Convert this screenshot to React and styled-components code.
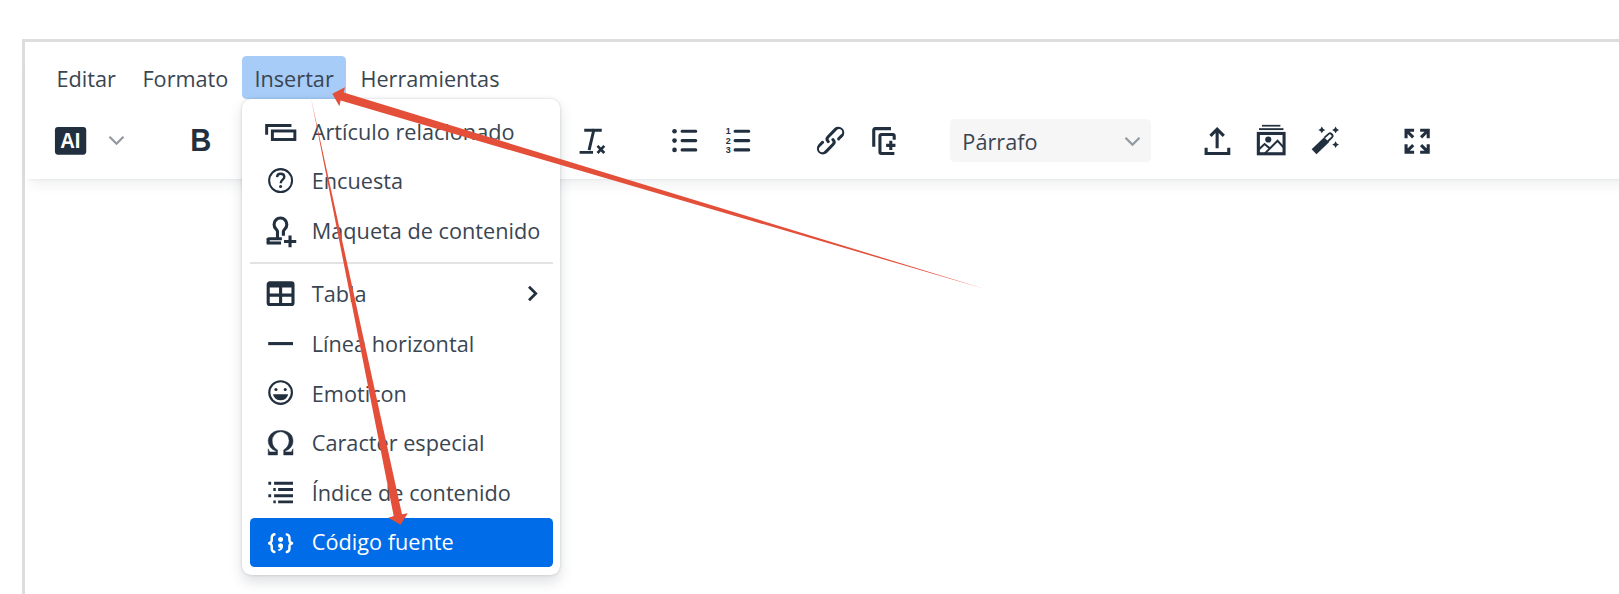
import styled, { createGlobalStyle } from 'styled-components';

const GlobalStyle = createGlobalStyle`
  * { box-sizing: border-box; }
  body {
    margin: 0;
    background: #fff;
    overflow: hidden;
    font-family: 'Open Sans', 'Noto Sans', sans-serif;
    font-size: 21.7px;
    color: #222f3e;
  }
`;

const Page = styled.div`
  width: 100vw;
  height: 594px;
  padding: 39px 0 0 22px;
  overflow: hidden;
  position: relative;
`;

const Editor = styled.div`
  width: 1640px;
  height: 600px;
  border: solid #ddd;
  border-width: 3px 0 0 3px;
`;

const Header = styled.header`
  height: 136.5px;
  padding: 13.7px 0 0 19px;
  background: #fff;
  box-shadow: 0 3px 3px -3px rgba(34, 47, 62, 0.1),
    0 12.4px 12.4px -6.2px rgba(34, 47, 62, 0.07);
`;

const MenuBar = styled.nav`
  display: flex;
  gap: 2px;
`;

const MenuSlot = styled.div`
  position: relative;
`;

const MenuButton = styled.button`
  display: block;
  height: 43.4px;
  width: ${props => props.$width}px;
  padding: 0 0 0 12.4px;
  border: 0;
  border-radius: 4.6px;
  background: ${props => (props.$open ? '#a6ccf7' : 'transparent')};
  color: #3a4552;
  font: inherit;
  line-height: 46px;
  text-align: left;
  white-space: nowrap;
`;

const Menu = styled.div`
  position: absolute;
  z-index: 2;
  top: 43.4px;
  left: 0;
  width: 318.4px;
  padding: 8px 7.8px;
  border-radius: 9.3px;
  background: #fff;
  box-shadow: 0 0 3px 0 rgba(34, 47, 62, 0.2), 0 6.2px 12.4px 0 rgba(34, 47, 62, 0.15);
`;

const MenuItem = styled.div`
  display: flex;
  align-items: center;
  height: 49.6px;
  padding: 0 12px 1.4px 12.4px;
  border-radius: 4.6px;
  background: ${props => (props.$active ? '#006ce7' : 'transparent')};
  color: ${props => (props.$active ? '#fff' : 'inherit')};
`;

const ItemLabel = styled.span`
  flex: 1;
  margin-left: 12.4px;
  color: ${props => (props.$active ? '#fff' : '#3a4552')};
  white-space: nowrap;
`;

const Separator = styled.hr`
  height: 1.5px;
  margin: 6.2px 0;
  border: 0;
  background: #e3e3e3;
`;

const ToolBar = styled.div`
  display: flex;
  align-items: center;
  gap: 39px;
  height: 43.4px;
  margin-top: 20px;
`;

const Group = styled.div`
  display: flex;
  align-items: center;
  justify-content: space-between;
  width: ${props => (props.$width ? `${props.$width}px` : 'auto')};
`;

const ToolButton = styled.button`
  display: flex;
  align-items: center;
  justify-content: center;
  width: ${props => props.$width || 53.6}px;
  height: 43.4px;
  padding: 0;
  border: 0;
  background: transparent;
  color: inherit;
`;

const BlockSelect = styled.div`
  display: flex;
  align-items: center;
  justify-content: space-between;
  width: 201.4px;
  height: 43.4px;
  padding: 1px 10px 0 12.4px;
  border-radius: 4.6px;
  background: #f6f6f6;
  color: #3a4552;
`;

const Svg = styled.svg`
  display: block;
  flex: none;
  width: 37.2px;
  height: 37.2px;
  overflow: visible;
  fill: none;
  stroke: currentColor;
  stroke-width: 2;
`;

const ChevronSvg = styled.svg`
  display: block;
  flex: none;
  width: 17px;
  height: 17px;
  fill: none;
  stroke: ${props => props.$color};
  stroke-width: ${props => props.$weight};
`;

const Arrows = styled.svg`
  position: absolute;
  z-index: 3;
  inset: 0;
  width: 1619px;
  height: 594px;
  fill: #e44f3a;
  pointer-events: none;
`;

const Solid = props => <g fill="currentColor" stroke="none" {...props} />;

const icons = {
  ai: (
    <>
      <rect x="1.9" y="3.3" width="20.2" height="17.8" rx="2" fill="#222f3e" stroke="none" />
      <text x="11.8" y="17" textAnchor="middle" fill="#fff" stroke="none"
        fontFamily="Liberation Sans" fontWeight="700" fontSize="13.8" textLength="13" lengthAdjust="spacingAndGlyphs">AI</text>
    </>
  ),
  bold: (
    <Solid>
      <text x="4.7" y="19" fontFamily="Liberation Sans" fontWeight="700" fontSize="20" textLength="13.6" lengthAdjust="spacingAndGlyphs">B</text>
    </Solid>
  ),
  clear: (
    <>
      <path d="M8.2 5.3h9.4M13.4 5.3 10.6 17.2M5.2 19.6h6.8" strokeLinecap="square" strokeWidth="1.9" />
      <path d="m15.8 15.4 4.4 4.6M20.2 15.4l-4.4 4.6" strokeWidth="1.7" />
    </>
  ),
  bullets: (
    <>
      <path d="M10.4 6h8.8M10.4 12h8.8M10.4 18h8.8" strokeLinecap="round" />
      <Solid>
        <circle cx="5.5" cy="6" r="1.5" />
        <circle cx="5.5" cy="12" r="1.5" />
        <circle cx="5.5" cy="18" r="1.5" />
      </Solid>
    </>
  ),
  numbers: (
    <>
      <path d="M10.4 6h8.8M10.4 12h8.8M10.4 18h8.8" strokeLinecap="round" />
      <Solid fontFamily="Liberation Sans" fontWeight="700" fontSize="5.8">
        <text x="4.4" y="8">1</text>
        <text x="4.4" y="14">2</text>
        <text x="4.4" y="20">3</text>
      </Solid>
    </>
  ),
  link: (
    <Solid>
      <path d="M6.2 12.3a1 1 0 0 1 1.4 1.4l-2 2a2 2 0 1 0 2.6 2.8l4.8-4.8a1 1 0 0 0 0-1.4 1 1 0 1 1 1.4-1.3 2.9 2.9 0 0 1 0 4L9.6 20a3.9 3.9 0 0 1-5.5-5.5l2-2Zm11.6-.6a1 1 0 0 1-1.4-1.4l2-2a2 2 0 1 0-2.6-2.8L11 10.3a1 1 0 0 0 0 1.4A1 1 0 1 1 9.6 13a2.9 2.9 0 0 1 0-4L14.4 4a3.9 3.9 0 0 1 5.5 5.5l-2 2Z" />
    </Solid>
  ),
  copyPlus: (
    <>
      <path d="M16.1 4.3H5.8a.8.8 0 0 0-.8.8V16" />
      <path d="M18.2 11.5V9a.9.9 0 0 0-.9-.9H9.9a.9.9 0 0 0-.9.9v10.4c0 .5.4.9.9.9h8.4" />
      <path d="M13 15.1h6M16 12.1v6" />
    </>
  ),
  upload: (
    <>
      <path d="M11.7 17V5M7.4 9 11.7 4.6 16 9" />
      <path d="M4.6 16.6v3.7h14.6v-3.7" />
    </>
  ),
  gallery: (
    <>
      <path d="M6.4 2.4h11.9" strokeWidth="1.1" />
      <path d="M4.5 4.6h15.8" strokeWidth="1.2" />
      <rect x="4.1" y="7.4" width="16.6" height="13.1" />
      <path d="m4.7 17.4 3.4-3.2 3 2.5M8.2 20.4l8.3-8.3 4 4.4" strokeWidth="1.3" />
      <circle cx="10.5" cy="11.3" r="2" fill="currentColor" stroke="none" />
    </>
  ),
  wand: (
    <>
      <path d="M5.2 19.2 13.3 11.4" strokeWidth="4.5" />
      <path d="m11.9 10.1 2.9-2.6c1-.8 3.1 1.1 2.1 2.3l-2.9 2.8" strokeWidth="1.2" />
      <Solid>
        <path d="m10.2 2.9.8 1.4 1.4.8-1.4.8-.8 1.4-.8-1.4-1.4-.8 1.4-.8zM19.1 2.9l.8 1.4 1.4.8-1.4.8-.8 1.4-.8-1.4-1.4-.8 1.4-.8zM19.1 12.4l.8 1.4 1.4.8-1.4.8-.8 1.4-.8-1.4-1.4-.8 1.4-.8z" />
      </Solid>
    </>
  ),
  fullscreen: (
    <path d="M5.2 10.5V5.3h5.2M5.4 5.5l4.4 4.4M14.3 5.3h5.2v5.2M19.3 5.5l-4.4 4.4M5.2 14.3v5.2h5.2M5.4 19.3l4.4-4.4M14.3 19.5h5.2v-5.2M19.3 19.3l-4.4-4.4" />
  ),
  related: (
    <>
      <path d="M19 8.1H3V14" strokeWidth="1.9" />
      <rect x="6.7" y="11.6" width="14.5" height="5.5" strokeWidth="1.9" />
    </>
  ),
  help: (
    <>
      <circle cx="12" cy="12" r="7.4" strokeWidth="1.3" />
      <path d="M9.7 9.8c.1-1.5 1.1-2.2 2.3-2.2 1.4 0 2.4.8 2.4 2.1 0 1.7-2.3 1.8-2.3 4" strokeWidth="1.5" />
      <circle cx="12" cy="15.8" r="1" fill="currentColor" stroke="none" />
    </>
  ),
  stamp: (
    <>
      <path d="M10 16.6V12.6c0-.7-.5-1-1-1.7A4.1 4.1 0 1 1 14.8 10.9c-.5.7-1 1-1 1.7V15.4M3.9 18.3c0-.7.3-1 .7-1h8.2" strokeWidth="2" />
      <path d="M3 20h9.3" strokeWidth="2" />
      <path d="M4 17v3.2M14.2 19h7.9M18.1 15.2v7.5" />
    </>
  ),
  table: (
    <Solid>
      <path d="M19 4a2 2 0 0 1 2 2v12a2 2 0 0 1-2 2H5a2 2 0 0 1-2-2V6c0-1.1.9-2 2-2h14ZM5 14v4h6v-4H5Zm14 0h-6v4h6v-4Zm0-6h-6v4h6V8ZM5 12h6V8H5v4Z" />
    </Solid>
  ),
  rule: <path d="M4 12h16" />,
  emoji: (
    <>
      <circle cx="12" cy="12" r="7.3" strokeWidth="1.4" />
      <Solid>
        <circle cx="9" cy="10" r="1" />
        <circle cx="15" cy="10" r="1" />
        <path d="M7.6 13h8.8c.3 0 .5.3.4.6a5.1 5.1 0 0 1-9.6 0c-.1-.3.1-.6.4-.6Z" />
      </Solid>
    </>
  ),
  omega: (
    <Solid>
      <path stroke="currentColor" strokeWidth=".3" d="M15 18h4l1-2v4h-6v-3.3l1.4-1a6 6 0 0 0 1.8-2.9 6.3 6.3 0 0 0-.1-4.1 5.8 5.8 0 0 0-3-3.2c-.6-.3-1.3-.5-2.1-.5a5.1 5.1 0 0 0-3.9 1.8 6.3 6.3 0 0 0-1.3 6 6.2 6.2 0 0 0 1.8 3l1.4.9V20H4v-4l1 2h4v-.5l-2-1L5.4 15A6.5 6.5 0 0 1 4 11c0-1 .2-1.9.6-2.7A7 7 0 0 1 7.8 5 9.9 9.9 0 0 1 12 4.2c1.5 0 3 .2 4.2.8a7.9 7.9 0 0 1 2.6 2c.4.6.7 1.2.9 2 .2.6.3 1.3.3 2 0 1.6-.5 2.9-1.4 4-.4.6-1 1-1.6 1.5l-2 1v.5Z" />
    </Solid>
  ),
  toc: (
    <path d="M4.1 6h1.8M7.8 6H20M7.3 10h1.6M10.4 10H20M4.1 14h1.8M7.8 14H20M7.3 18h1.6M10.4 18H20" strokeWidth="1.9" />
  ),
  source: (
    <Solid>
      <path d="M7.1 11a2.8 2.8 0 0 1-.8 2 2.8 2.8 0 0 1 .8 2v1.7c0 .3.1.6.4.8.2.3.5.4.8.4.3 0 .4.2.4.4v.8c0 .2-.1.4-.4.4-.7 0-1.4-.3-2-.8-.5-.6-.8-1.3-.8-2V15c0-.3-.1-.6-.4-.8-.2-.3-.5-.4-.8-.4a.4.4 0 0 1-.4-.4v-.8c0-.2.2-.4.4-.4.3 0 .6-.1.8-.4.3-.2.4-.5.4-.8V9.3c0-.7.3-1.4.8-2 .6-.5 1.3-.8 2-.8.3 0 .4.2.4.4v.8c0 .2-.1.4-.4.4-.3 0-.6.1-.8.4-.3.2-.4.5-.4.8V11Zm9.8 0V9.3c0-.3-.1-.6-.4-.8-.2-.3-.5-.4-.8-.4a.4.4 0 0 1-.4-.4V7c0-.2.1-.4.4-.4.7 0 1.4.3 2 .8.5.6.8 1.3.8 2V11c0 .3.1.6.4.8.2.3.5.4.8.4.2 0 .4.2.4.4v.8c0 .2-.2.4-.4.4-.3 0-.6.1-.8.4-.3.2-.4.5-.4.8v1.7c0 .7-.3 1.4-.8 2-.6.5-1.3.8-2 .8a.4.4 0 0 1-.4-.4v-.8c0-.2.1-.4.4-.4.3 0 .6-.1.8-.4.3-.2.4-.5.4-.8V15a2.8 2.8 0 0 1 .8-2 2.8 2.8 0 0 1-.8-2Zm-3.3-.4c0 .4-.1.8-.5 1.1-.3.3-.7.5-1.1.5-.4 0-.8-.2-1.1-.5-.4-.3-.5-.7-.5-1.1 0-.5.1-.9.5-1.2.3-.3.7-.4 1.1-.4.4 0 .8.1 1.1.4.4.3.5.7.5 1.2ZM12 13c.4 0 .8.1 1.1.5.4.3.5.7.5 1.1 0 1-.1 1.6-.5 2a3 3 0 0 1-1.1 1c-.4.3-.8.4-1.1.4a.5.5 0 0 1-.5-.5V17a3 3 0 0 0 1-.2l.6-.6c-.6 0-1-.2-1.3-.5-.2-.3-.3-.7-.3-1 0-.5.1-1 .5-1.2.3-.4.7-.5 1.1-.5Z" />
    </Solid>
  )
};

const Icon = ({ name }) => <Svg viewBox="0 0 24 24">{icons[name]}</Svg>;

const Tool = ({ name }) => (
  <ToolButton aria-label={name}>
    <Icon name={name} />
  </ToolButton>
);

const Chevron = ({ right }) => (
  <ChevronSvg viewBox="0 0 17 17" $color={right ? '#222f3e' : '#939aa2'} $weight={right ? 2.7 : 2.3}>
    <path d={right ? 'm5 1.7 6.8 6.8L5 15.3' : 'm1.5 4.7 7 7 7-7'} />
  </ChevronSvg>
);

const insertItems = [
  { icon: 'related', label: 'Artículo relacionado' },
  { icon: 'help', label: 'Encuesta' },
  { icon: 'stamp', label: 'Maqueta de contenido' },
  null,
  { icon: 'table', label: 'Tabla', submenu: true },
  { icon: 'rule', label: 'Línea horizontal' },
  { icon: 'emoji', label: 'Emoticon' },
  { icon: 'omega', label: 'Caracter especial' },
  { icon: 'toc', label: 'Índice de contenido' },
  { icon: 'source', label: 'Código fuente', active: true }
];

const InsertMenu = () => (
  <Menu>
    {insertItems.map((item, i) =>
      item ? (
        <MenuItem key={item.label} $active={item.active}>
          <Icon name={item.icon} />
          <ItemLabel $active={item.active}>{item.label}</ItemLabel>
          {item.submenu && <Chevron right />}
        </MenuItem>
      ) : (
        <Separator key={i} />
      )
    )}
  </Menu>
);

const App = () => (
  <Page>
    <GlobalStyle />
    <Editor>
      <Header>
        <MenuBar>
          <MenuButton $width={84}>Editar</MenuButton>
          <MenuButton $width={110}>Formato</MenuButton>
          <MenuSlot>
            <MenuButton $width={104} $open>Insertar</MenuButton>
            <InsertMenu />
          </MenuSlot>
          <MenuButton $width={163}>Herramientas</MenuButton>
        </MenuBar>
        <ToolBar>
          <Group>
            <Tool name="ai" />
            <ToolButton $width={38} aria-label="ai menu">
              <Chevron />
            </ToolButton>
          </Group>
          <Group $width={444}>
            <Tool name="bold" />
            <Tool name="clear" />
          </Group>
          <Group>
            <Tool name="bullets" />
            <Tool name="numbers" />
          </Group>
          <Group>
            <Tool name="link" />
            <Tool name="copyPlus" />
          </Group>
          <BlockSelect>
            Párrafo
            <Chevron />
          </BlockSelect>
          <Group>
            <Tool name="upload" />
            <Tool name="gallery" />
            <Tool name="wand" />
          </Group>
          <Group>
            <Tool name="fullscreen" />
          </Group>
        </ToolBar>
      </Header>
    </Editor>
    <Arrows viewBox="0 0 1619 594">
      <path d="M332.3 93.8 345 87.3 343.7 92.6 985 289 340.6 100.6 339.4 106.2Z" />
      <path d="M400.5 524.7 388.3 517.7 393.7 516 311 98 402 514.3 407.8 513.3Z" />
    </Arrows>
  </Page>
);

export default App;
